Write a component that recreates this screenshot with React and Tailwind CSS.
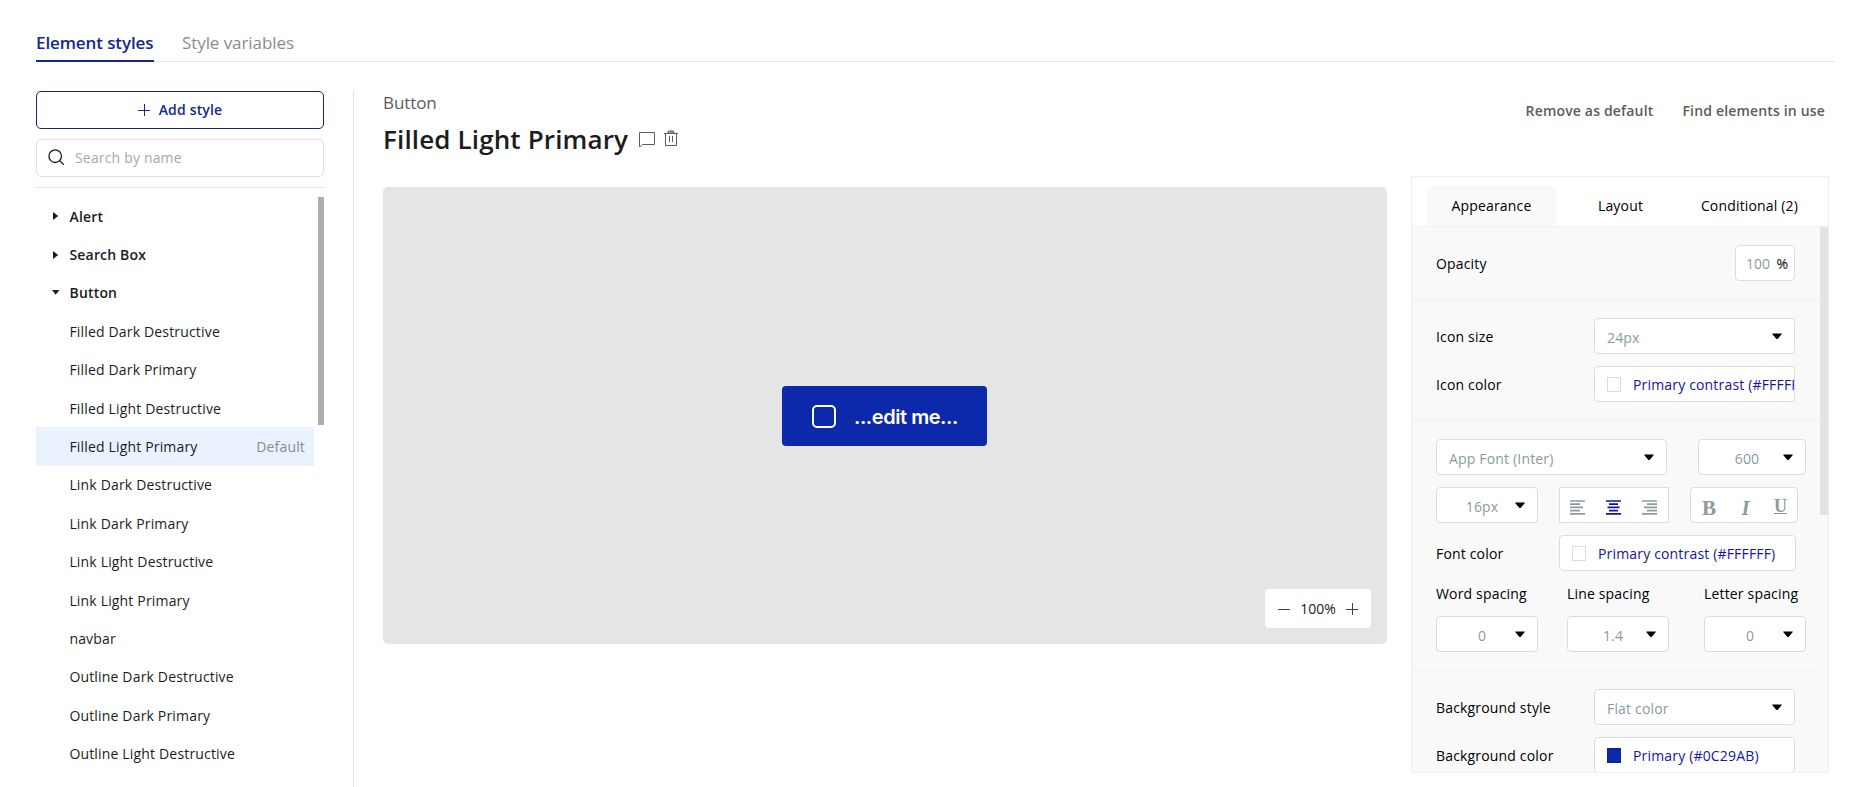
import React from 'react';

const groups = ['Alert', 'Search Box'];
const styles = [
  'Filled Dark Destructive',
  'Filled Dark Primary',
  'Filled Light Destructive',
  'Filled Light Primary',
  'Link Dark Destructive',
  'Link Dark Primary',
  'Link Light Destructive',
  'Link Light Primary',
  'navbar',
  'Outline Dark Destructive',
  'Outline Dark Primary',
  'Outline Light Destructive',
];

function Plus({ className }) {
  return (
    <svg className={className} width="12" height="12" viewBox="0 0 12 12" fill="none" stroke="currentColor">
      <path d="M6.5 0v12M0 6.5h12" />
    </svg>
  );
}

function Caret() {
  return (
    <svg className="shrink-0" width="10" height="7" viewBox="0 0 10 7">
      <path d="M0.6 0.5h8.8q.8 0 .2.8L5.8 5.7q-.8.8-1.6 0L.4 1.3q-.6-.8.2-.8z" fill="#000" />
    </svg>
  );
}

function GroupArrow({ open }) {
  return (
    <svg className="shrink-0" width="8" height="8" viewBox="0 0 8 8">
      <path d={open ? 'M0 1h7.4L3.7 5.8z' : 'M1 0v8L6.2 4z'} fill="#1c1c1c" />
    </svg>
  );
}

function Select({ className, children, centered }) {
  return (
    <div className={`flex h-9 shrink-0 items-center rounded-[4px] border border-[#dcdcdc] bg-white pr-[12px] text-[#8a9ba0] ${className}`}>
      <span className={`flex-1 pt-[3px] ${centered ? 'pl-3 text-center' : 'pl-3'}`}>{children}</span>
      <Caret />
    </div>
  );
}

function ColorField({ className, swatch, children }) {
  return (
    <div className={`flex h-9 shrink-0 items-center gap-3 overflow-hidden whitespace-nowrap rounded-[4px] border border-[#dcdcdc] bg-white pl-3 text-[#1414a0] ${className}`}>
      <span className={`h-[15px] w-[14px] shrink-0 border ${swatch}`} />
      <span className="pt-px">{children}</span>
    </div>
  );
}

function AlignIcon({ d, color }) {
  return (
    <svg width="15" height="15" viewBox="0 0 15 15" fill="none" stroke={color} strokeWidth="1.7">
      <path d={d} />
    </svg>
  );
}

function Row({ label, children }) {
  return (
    <div className="flex h-9 items-center justify-between">
      <span>{label}</span>
      {children}
    </div>
  );
}

export default function App() {
  return (
    <div className="flex h-[787px] w-[1859px] flex-col overflow-hidden bg-white pl-9 font-['Open_Sans',sans-serif] text-[14px] tracking-[0.17px] text-[#1c1c1c]">
      <nav className="flex h-[62px] w-[1799px] shrink-0 items-end gap-7 bg-[linear-gradient(#e3e3e3,#e3e3e3)] bg-[length:100%_1px] bg-[position:0_61px] bg-no-repeat text-[17px] leading-6">
        <div className="h-[31px] w-[118px] whitespace-nowrap border-b-2 border-[#12288c] font-semibold tracking-[-0.1px] text-[#12288c]">Element styles</div>
        <div className="h-[31px] tracking-[-0.08px] text-[#8c8c8c]">Style variables</div>
      </nav>

      <div className="flex min-h-0 flex-1 pt-[29px]">
        <aside className="flex w-72 shrink-0 flex-col">
          <button className="flex h-[38px] shrink-0 items-center justify-center gap-[9px] rounded-[5px] border border-[#12286e] pb-px font-semibold tracking-[0.17px] text-[#12288c]">
            <Plus /> <span>Add style</span>
          </button>
          <div className="mt-[10px] flex h-[38px] shrink-0 items-center rounded-[5px] border border-[#e0e0e0] pb-px pl-[11px] text-[#a8a8a8]">
            <svg width="17" height="17" viewBox="0 0 17 17" fill="none" stroke="#1c1c1c" strokeWidth="1.3">
              <circle cx="7.2" cy="7.2" r="6.3" />
              <path d="M11.6 11.6l4.2 4.2" />
            </svg>
            <span className="ml-[10px]">Search by name</span>
          </div>
          <div className="mt-[10px] h-px shrink-0 bg-[#e3e3e3]" />
          <div className="mt-[9px] flex min-h-0 flex-1 justify-between overflow-hidden">
            <div className="w-[278px]">
              {groups.map((g) => (
                <div key={g} className="flex h-[38.4px] items-center gap-[9.5px] pl-4 font-semibold">
                  <GroupArrow />
                  {g}
                </div>
              ))}
              <div className="flex h-[38.4px] items-center gap-[9.5px] pl-4 font-semibold">
                <GroupArrow open />
                Button
              </div>
              {styles.map((s) => (
                <div
                  key={s}
                  className={`flex h-[38.4px] items-center justify-between pl-[33.4px] pr-[9px] ${s === 'Filled Light Primary' ? 'bg-[#eaf2ff]' : ''}`}
                >
                  <span>{s}</span>
                  {s === 'Filled Light Primary' && <span className="text-[#8c8c8c]">Default</span>}
                </div>
              ))}
            </div>
            <div className="h-[228px] w-1.5 bg-[#adadad]" />
          </div>
        </aside>

        <div className="ml-[29px] w-px shrink-0 bg-[#e3e3e3]" />

        <main className="ml-[29px] flex w-[1004px] shrink-0 flex-col">
          <div className="h-6 text-[17px] leading-6 tracking-[-0.08px] text-[#5c5c5c]">Button</div>
          <div className="mt-[6px] flex h-9 items-center">
            <h1 className="w-[246px] whitespace-nowrap text-[26px] font-semibold leading-9 tracking-[0.14px]">Filled Light Primary</h1>
            <svg className="ml-[10px] mt-[2px]" width="17" height="16" viewBox="0 0 17 16" fill="none" stroke="#5c5c5c">
              <path d="M.5.5h15v12h-12L1.2 14.8H.5z" />
            </svg>
            <svg className="mb-px ml-[8px]" width="14" height="17" viewBox="0 0 14 17" fill="none" stroke="#5c5c5c">
              <path d="M0 3.5h14M1.5 3.5v12h11v-12M5.5 6v6M8.5 6v6" />
              <path d="M3.5 3.5l1-2.5h5l1 2.5z" fill="#a0a0a0" />
            </svg>
          </div>
          <section className="relative mt-[30px] flex h-[457px] items-center justify-center rounded-[5px] bg-[#e5e5e5]">
            <button className="mr-px mt-px flex h-[60px] w-[205px] items-center rounded-[4px] bg-[#0c29ab] pl-[30px] font-['Inter',sans-serif] text-[20px] font-semibold tracking-[-0.45px] text-white">
              <span className="h-[23px] w-[24px] rounded-[5px] border-2 border-white" />
              <span className="ml-[18px] pt-px">...edit me...</span>
            </button>
            <div className="absolute bottom-4 right-4 flex h-[39px] w-[106px] items-center justify-between rounded-[4px] bg-white px-[13px] tracking-normal">
              <svg width="12" height="12" viewBox="0 0 12 12" stroke="#404040">
                <path d="M0 6.5h12" />
              </svg>
              <span>100%</span>
              <Plus className="text-[#404040]" />
            </div>
          </section>
        </main>

        <section className="ml-6 flex w-[418px] shrink-0 flex-col text-black">
          <div className="flex h-[38px] items-center justify-end gap-[29px] pr-1 font-semibold text-[#5c5c5c]">
            <span>Remove as default</span>
            <span>Find elements in use</span>
          </div>
          <div className="mt-[47px] flex h-[597px] flex-col overflow-hidden border border-[#f0f0f0] bg-[#f9f9f9]">
            <div className="flex h-[50px] shrink-0 items-end border-b border-[#f2f2f2] bg-white pl-[15px]">
              <div className="flex h-10 w-[129px] items-center justify-center rounded-t-[5px] bg-[#f9f9f9] pb-px">Appearance</div>
              <div className="flex h-10 w-[129px] items-center justify-center pb-px">Layout</div>
              <div className="flex h-10 w-[129px] items-center justify-center pb-px">Conditional (2)</div>
            </div>
            <div className="flex min-h-0 flex-1 justify-between overflow-hidden">
              <div className="w-[408px] shrink-0">
                <div className="h-[73px] border-b border-[#f2f2f2] pl-6 pr-[25px] pt-[18px]">
                  <Row label="Opacity">
                    <div className="flex h-9 w-[60px] items-center justify-between rounded-[4px] border border-[#dcdcdc] bg-white pl-[10px] pr-1.5 tracking-normal">
                      <span className="text-[#8a9ba0]">100</span>
                      <span className="pt-px">%</span>
                    </div>
                  </Row>
                </div>
                <div className="flex h-[121px] flex-col gap-3 border-b border-[#f2f2f2] pl-6 pr-[25px] pt-[18px]">
                  <Row label="Icon size">
                    <Select className="w-[201px]">24px</Select>
                  </Row>
                  <Row label="Icon color">
                    <ColorField className="w-[201px]" swatch="border-[#dcdcdc] bg-white">Primary contrast (#FFFFFF)</ColorField>
                  </Row>
                </div>
                <div className="flex h-[250px] flex-col border-b border-[#f2f2f2] pl-6 pt-[18px]">
                  <div className="flex gap-[31px]">
                    <Select className="w-[231px]">App Font (Inter)</Select>
                    <Select className="w-[108px]" centered>600</Select>
                  </div>
                  <div className="mt-3 flex gap-[21px]">
                    <Select className="w-[102px]" centered>16px</Select>
                    <div className="flex h-9 w-[110px] items-center justify-between border border-[#dcdcdc] bg-white pl-[10px] pr-[11px] pt-[4px]">
                      <AlignIcon color="#8a9ba0" d="M0 1h15M0 4.2h10M0 7.4h13M0 10.6h10M0 13.8h15" />
                      <AlignIcon color="#1414a0" d="M0 1h15M3 4.2h9M1.5 7.4h12M3 10.6h9M0 13.8h15" />
                      <AlignIcon color="#8a9ba0" d="M0 1h15M5 4.2h10M2 7.4h13M5 10.6h10M0 13.8h15" />
                    </div>
                    <div className="flex h-9 w-[108px] items-start justify-between rounded-[4px] border border-[#dcdcdc] bg-white pl-[11px] pr-[10px] pt-[8px] font-['Liberation_Serif',serif] text-[21px] font-bold leading-6 tracking-normal text-[#8a9ba0]">
                      <span>B</span>
                      <span className="pl-px italic">I</span>
                      <span className="mt-[3px] h-[15px] border-b-[1.5px] border-[#8a9ba0] text-[18px] leading-[15px]">U</span>
                    </div>
                  </div>
                  <div className="mt-3 flex items-center">
                    <span className="w-[123px]">Font color</span>
                    <ColorField className="w-[237px]" swatch="border-[#dcdcdc] bg-white">Primary contrast (#FFFFFF)</ColorField>
                  </div>
                  <div className="mt-3 flex h-5 items-center">
                    <span className="w-[131px]">Word spacing</span>
                    <span className="w-[137px]">Line spacing</span>
                    <span>Letter spacing</span>
                  </div>
                  <div className="mt-[13px] flex">
                    <Select className="w-[102px]" centered>0</Select>
                    <Select className="ml-[29px] w-[102px]" centered>1.4</Select>
                    <Select className="ml-[35px] w-[102px]" centered>0</Select>
                  </div>
                </div>
                <div className="flex flex-col gap-3 pl-6 pr-[25px] pt-[18px]">
                  <Row label="Background style">
                    <Select className="w-[201px]">Flat color</Select>
                  </Row>
                  <Row label="Background color">
                    <ColorField className="w-[201px]" swatch="border-[#0b2590] bg-[#0c29ab]">Primary (#0C29AB)</ColorField>
                  </Row>
                </div>
              </div>
              <div className="h-[288px] w-2 bg-[#e3e3e3]" />
            </div>
          </div>
        </section>
      </div>
    </div>
  );
}
